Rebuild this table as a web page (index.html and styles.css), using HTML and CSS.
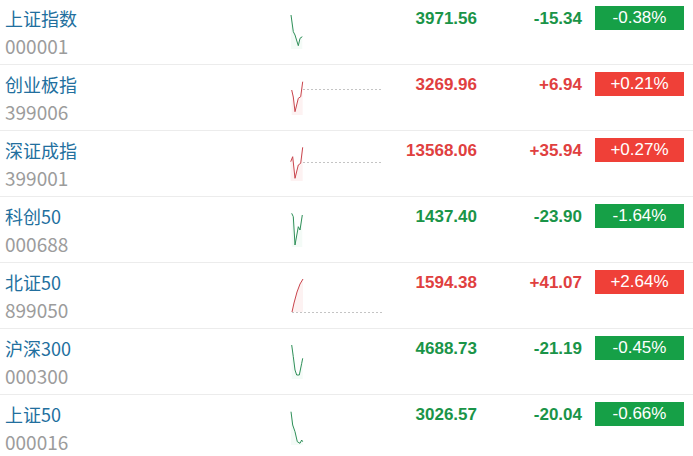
FILE: index.html
```html
<!DOCTYPE html>
<html lang="zh">
<head>
<meta charset="utf-8">
<title>指数</title>
<link rel="stylesheet" href="styles.css">
</head>
<body>
<div class="list">
  <div class="row">
    <div class="name"><div class="title">上证指数</div><div class="code">000001</div></div>
    <svg class="spark" viewBox="0 0 92 35"><polygon class="fill-g" points="1,1 3.3,17.7 5,21 8.3,31.7 10,24.3 12.3,22.7 12.3,35 1,35"/><polyline class="ln-g" points="1,1 3.3,17.7 5,21 8.3,31.7 10,24.3 12.3,22.7"/></svg>
    <div class="price down">3971.56</div>
    <div class="chg down">-15.34</div>
    <div class="badge bg-down">-0.38%</div>
  </div>
  <div class="row">
    <div class="name"><div class="title">创业板指</div><div class="code">399006</div></div>
    <svg class="spark" viewBox="0 0 92 35"><polygon class="fill-r" points="1.7,10 3.3,17 5,31.7 8.3,18.3 10.7,16.7 12.7,1.7 12.7,35 1.7,35"/><line class="dash" x1="13" y1="9.5" x2="92" y2="9.5"/><polyline class="ln-r" points="1.7,10 3.3,17 5,31.7 8.3,18.3 10.7,16.7 12.7,1.7"/></svg>
    <div class="price up">3269.96</div>
    <div class="chg up">+6.94</div>
    <div class="badge bg-up">+0.21%</div>
  </div>
  <div class="row">
    <div class="name"><div class="title">深证成指</div><div class="code">399001</div></div>
    <svg class="spark" viewBox="0 0 92 35"><polygon class="fill-r" points="0.7,15.7 2.7,10.7 5,32.3 8.3,19 10.7,17.3 12.7,1.3 12.7,35 0.7,35"/><line class="dash" x1="13" y1="16.5" x2="92" y2="16.5"/><polyline class="ln-r" points="0.7,15.7 2.7,10.7 5,32.3 8.3,19 10.7,17.3 12.7,1.3"/></svg>
    <div class="price up">13568.06</div>
    <div class="chg up">+35.94</div>
    <div class="badge bg-up">+0.27%</div>
  </div>
  <div class="row">
    <div class="name"><div class="title">科创50</div><div class="code">000688</div></div>
    <svg class="spark" viewBox="0 0 92 35"><polygon class="fill-g" points="1.7,1.3 3.3,4.7 5,33 8.3,14.7 10,18 12.3,3 12.3,35 1.7,35"/><polyline class="ln-g" points="1.7,1.3 3.3,4.7 5,33 8.3,14.7 10,18 12.3,3"/></svg>
    <div class="price down">1437.40</div>
    <div class="chg down">-23.90</div>
    <div class="badge bg-down">-1.64%</div>
  </div>
  <div class="row">
    <div class="name"><div class="title">北证50</div><div class="code">899050</div></div>
    <svg class="spark" viewBox="0 0 92 35"><polygon class="fill-r" points="2,34 4,25 7,14 10,6 13,1 13,34"/><line class="dash" x1="2" y1="34.5" x2="92" y2="34.5"/><polyline class="ln-r" points="2,34 4,25 7,14 10,6 13,1"/></svg>
    <div class="price up">1594.38</div>
    <div class="chg up">+41.07</div>
    <div class="badge bg-up">+2.64%</div>
  </div>
  <div class="row">
    <div class="name"><div class="title">沪深300</div><div class="code">000300</div></div>
    <svg class="spark" viewBox="0 0 92 35"><polygon class="fill-g" points="1.7,1 3.3,12.7 5,26 6.7,31 9.3,31 11.7,19.3 12.7,14.3 12.7,35 1.7,35"/><polyline class="ln-g" points="1.7,1 3.3,12.7 5,26 6.7,31 9.3,31 11.7,19.3 12.7,14.3"/></svg>
    <div class="price down">4688.73</div>
    <div class="chg down">-21.19</div>
    <div class="badge bg-down">-0.45%</div>
  </div>
  <div class="row">
    <div class="name"><div class="title">上证50</div><div class="code">000016</div></div>
    <svg class="spark" viewBox="0 0 92 35"><polygon class="fill-g" points="1,1.7 2.7,15 5,21.7 7.3,31.7 10,33.3 11.7,30 12.7,31.7 12.7,35 1,35"/><polyline class="ln-g" points="1,1.7 2.7,15 5,21.7 7.3,31.7 10,33.3 11.7,30 12.7,31.7"/></svg>
    <div class="price down">3026.57</div>
    <div class="chg down">-20.04</div>
    <div class="badge bg-down">-0.66%</div>
  </div>
</div>
</body>
</html>
```
FILE: styles.css
```css
html, body {
  margin: 0;
  padding: 0;
  background: #ffffff;
}
body {
  font-family: "Noto Sans CJK SC", "Microsoft YaHei", sans-serif;
}
.list {
  margin-top: -1px;
}
.row {
  display: flex;
  align-items: flex-start;
  height: 66px;
  box-sizing: border-box;
  padding: 6px 0 0 5px;
  border-bottom: 1px solid #ececec;
}
.name {
  width: 285px;
  font-size: 18px;
  line-height: 27px;
}
.title {
  color: #226f9e;
}
.code {
  color: #9c9c9c;
  font-size: 19px;
}
.spark {
  width: 92px;
  height: 35px;
  margin-top: 9px;
  overflow: visible;
}
.ln-g, .ln-r {
  fill: none;
  stroke-width: 1;
  stroke-linejoin: round;
}
.ln-g { stroke: #2e8f58; }
.ln-r { stroke: #c9444c; }
.fill-g { fill: #2eaa5a; fill-opacity: 0.05; }
.fill-r { fill: #e24b4b; fill-opacity: 0.07; }
.dash {
  stroke: #c4c4c4;
  stroke-width: 1;
  stroke-dasharray: 2 2;
}
.price, .chg {
  text-align: right;
  font-family: "Liberation Sans", Arial, sans-serif;
  font-weight: bold;
  font-size: 17px;
  line-height: 26px;
  margin-top: 1px;
}
.price { width: 95px; }
.chg { width: 105px; }
.up { color: #e0403f; }
.down { color: #1a9448; }
.badge {
  margin-left: 13px;
  margin-top: 1px;
  width: 89px;
  height: 24px;
  line-height: 24px;
  text-align: center;
  color: #ffffff;
  font-family: "Liberation Sans", Arial, sans-serif;
  font-size: 17px;
}
.bg-up { background: #ef4038; }
.bg-down { background: #16a047; }
```
